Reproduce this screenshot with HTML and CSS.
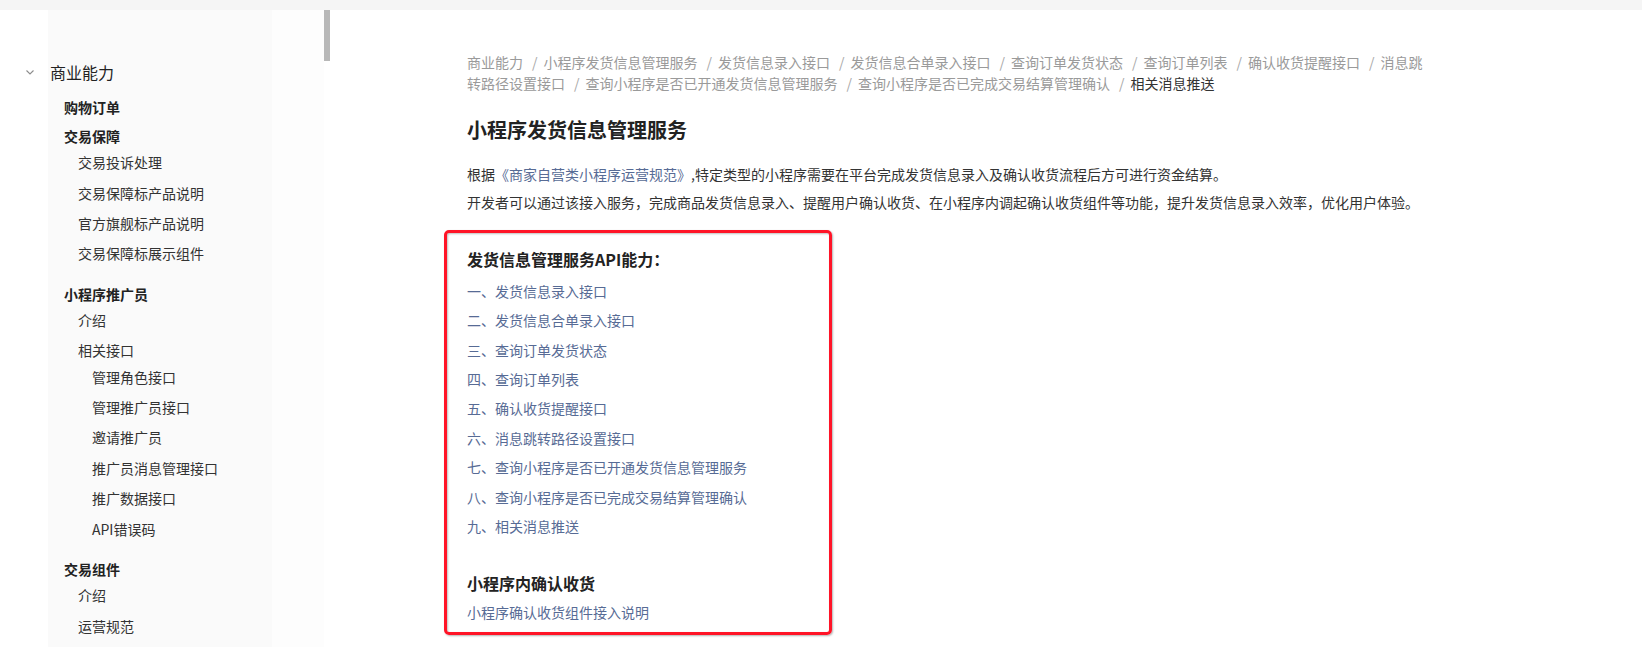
FILE: index.html
```html
<!DOCTYPE html>
<html lang="zh-CN">
<head>
<meta charset="utf-8">
<title>小程序发货信息管理服务</title>
<link rel="stylesheet" href="styles.css">
</head>
<body>
<div class="topbar"></div>
<div class="layout">
  <nav class="sidebar">
    <div class="scroll-thumb"></div>
    <div class="nav-root">
      <svg class="chevron" width="8" height="5" viewBox="0 0 8 5"><path d="M0.5 0.5 L4 4 L7.5 0.5" fill="none" stroke="#8c8c8c" stroke-width="1.1"/></svg>
      <span>商业能力</span>
    </div>
    <ul class="groups">
      <li class="group group-leaf"><div class="group-title">购物订单</div></li>
      <li class="group">
        <div class="group-title">交易保障</div>
        <ul class="items">
          <li class="item">交易投诉处理</li>
          <li class="item">交易保障标产品说明</li>
          <li class="item">官方旗舰标产品说明</li>
          <li class="item">交易保障标展示组件</li>
        </ul>
      </li>
      <li class="group">
        <div class="group-title">小程序推广员</div>
        <ul class="items">
          <li class="item">介绍</li>
          <li class="item-parent">
            <div class="item-label">相关接口</div>
            <ul class="subitems">
              <li class="item">管理角色接口</li>
              <li class="item">管理推广员接口</li>
              <li class="item">邀请推广员</li>
              <li class="item">推广员消息管理接口</li>
              <li class="item">推广数据接口</li>
              <li class="item">API错误码</li>
            </ul>
          </li>
        </ul>
      </li>
      <li class="group">
        <div class="group-title">交易组件</div>
        <ul class="items">
          <li class="item">介绍</li>
          <li class="item">运营规范</li>
        </ul>
      </li>
    </ul>
  </nav>
  <main class="main">
    <div class="content">
      <div class="breadcrumb"><span class="crumb">商业能力</span><span class="sep">/</span><span class="crumb">小程序发货信息管理服务</span><span class="sep">/</span><span class="crumb">发货信息录入接口</span><span class="sep">/</span><span class="crumb">发货信息合单录入接口</span><span class="sep">/</span><span class="crumb">查询订单发货状态</span><span class="sep">/</span><span class="crumb">查询订单列表</span><span class="sep">/</span><span class="crumb">确认收货提醒接口</span><span class="sep">/</span><span class="crumb">消息跳转路径设置接口</span><span class="sep">/</span><span class="crumb">查询小程序是否已开通发货信息管理服务</span><span class="sep">/</span><span class="crumb">查询小程序是否已完成交易结算管理确认</span><span class="sep">/</span><span class="crumb current">相关消息推送</span></div>
      <h1 class="title">小程序发货信息管理服务</h1>
      <p class="para">根据<a class="link">《商家自营类小程序运营规范》</a>,特定类型的小程序需要在平台完成发货信息录入及确认收货流程后方可进行资金结算。</p>
      <p class="para">开发者可以通过该接入服务，完成商品发货信息录入、提醒用户确认收货、在小程序内调起确认收货组件等功能，提升发货信息录入效率，优化用户体验。</p>
      <section class="highlight">
        <h3 class="sub-title">发货信息管理服务API能力：</h3>
        <ul class="api-list">
          <li><a class="link">一、发货信息录入接口</a></li>
          <li><a class="link">二、发货信息合单录入接口</a></li>
          <li><a class="link">三、查询订单发货状态</a></li>
          <li><a class="link">四、查询订单列表</a></li>
          <li><a class="link">五、确认收货提醒接口</a></li>
          <li><a class="link">六、消息跳转路径设置接口</a></li>
          <li><a class="link">七、查询小程序是否已开通发货信息管理服务</a></li>
          <li><a class="link">八、查询小程序是否已完成交易结算管理确认</a></li>
          <li><a class="link">九、相关消息推送</a></li>
        </ul>
        <h3 class="sub-title second">小程序内确认收货</h3>
        <div class="api-list last"><a class="link">小程序确认收货组件接入说明</a></div>
      </section>
    </div>
  </main>
</div>
</body>
</html>
```

FILE: styles.css
```css
* { box-sizing: border-box; }
html, body {
  margin: 0;
  padding: 0;
  height: 100%;
  overflow: hidden;
  background: #fff;
}
body {
  font-family: "Noto Sans CJK SC", "Noto Sans", sans-serif;
  font-size: 14px;
  color: #333;
}
ul { list-style: none; margin: 0; padding: 0; }
h1, h3, p { margin: 0; }

.topbar {
  height: 10px;
  background: #f5f5f5;
}
.layout {
  display: flex;
  height: calc(100% - 10px);
}

/* Sidebar */
.sidebar {
  position: relative;
  flex: 0 0 330px;
  padding-top: 50px;
  background: linear-gradient(to right, #ffffff 0, #ffffff 48px, #fafafa 48px, #fafafa 272px, #fdfdfd 272px, #fdfdfd 324px, #ffffff 324px);
}
.scroll-thumb {
  position: absolute;
  top: 0;
  right: 0;
  width: 6px;
  height: 51px;
  background: #b8b8b8;
}
.nav-root {
  display: flex;
  align-items: center;
  gap: 16px;
  padding-left: 26px;
  height: 24px;
  line-height: 24px;
  font-size: 16px;
  color: #222;
  margin-bottom: 12px;
}
.chevron { display: block; }
.groups { padding-left: 64px; }
.group { margin-bottom: 14.4px; }
.group-leaf { margin-bottom: 7px; }
.group-title {
  line-height: 22px;
  font-weight: 700;
  color: #222;
}
.items { padding-left: 14px; }
.item {
  line-height: 22px;
  padding: 4.2px 0;
  color: #333;
}
.item-label {
  line-height: 22px;
  padding-top: 4.2px;
  color: #333;
}
.subitems { padding-left: 14px; }

/* Main */
.main {
  flex: 1;
  padding-top: 41.5px;
  padding-left: 137px;
}
.content { width: 958px; }
.breadcrumb {
  line-height: 21px;
  color: #9a9a9a;
}
.crumb.current { color: #333; }
.sep {
  margin: 0 6px 0 9px;
  color: #a8a8a8;
}
.title {
  margin-top: 22px;
  line-height: 28px;
  font-size: 20px;
  font-weight: 600;
  color: #222;
}
.para {
  line-height: 28px;
  color: #333;
}
.title + .para { margin-top: 16px; }
.link {
  color: #576b95;
  text-decoration: none;
  cursor: pointer;
}

.highlight {
  margin-top: 14px;
  margin-left: -23px;
  width: 388px;
  padding: 14px 20px 4.3px 20px;
  border: 3px solid #ff1427;
  border-radius: 5px;
  box-shadow: 1px 1px 2px rgba(0, 0, 0, 0.3), inset 1px 1px 2px rgba(0, 0, 0, 0.25);
}
.sub-title {
  line-height: 24px;
  font-size: 16px;
  font-weight: 700;
  color: #222;
  margin-bottom: 6.3px;
}
.sub-title.second {
  margin-top: 29.3px;
  margin-bottom: 3.3px;
}
.api-list li,
.api-list.last {
  line-height: 29.4px;
}
```
